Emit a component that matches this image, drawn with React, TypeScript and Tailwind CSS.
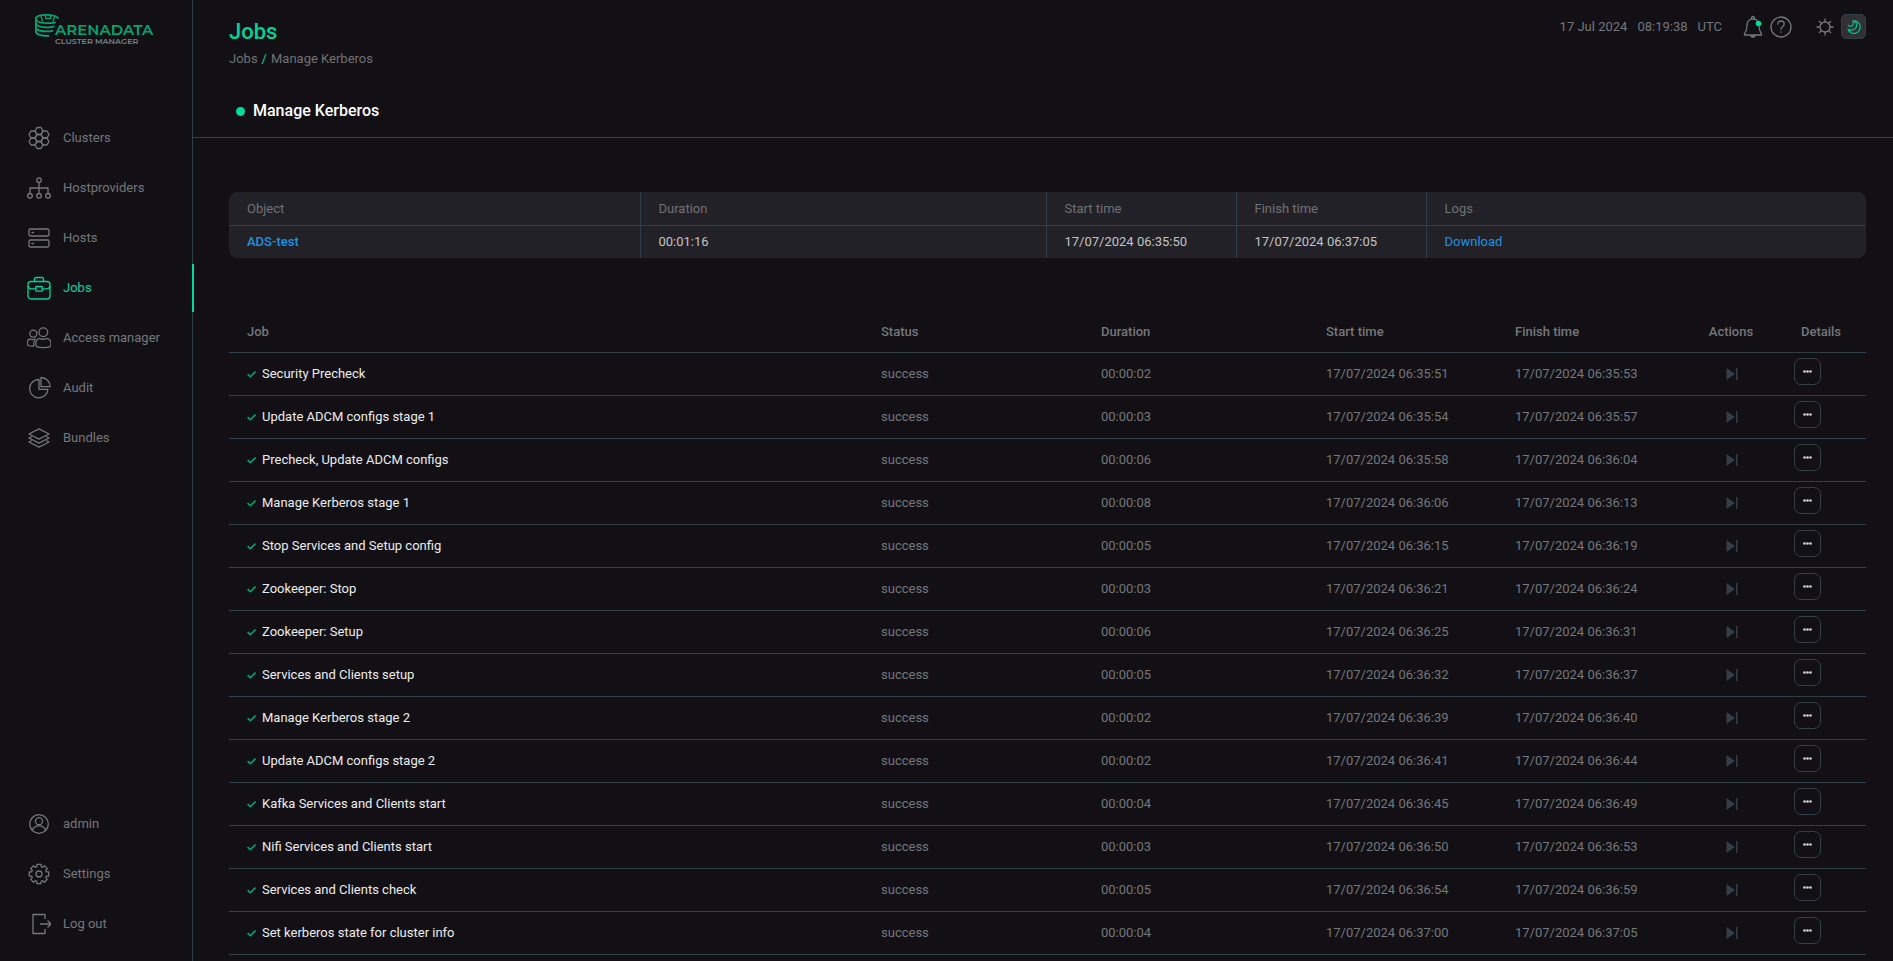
import React from 'react';

const NAV = [
  { label: 'Clusters', icon: ClustersIcon },
  { label: 'Hostproviders', icon: HostprovidersIcon },
  { label: 'Hosts', icon: HostsIcon },
  { label: 'Jobs', icon: JobsIcon },
  { label: 'Access manager', icon: AccessIcon },
  { label: 'Audit', icon: AuditIcon },
  { label: 'Bundles', icon: BundlesIcon },
];

const NAV_BOTTOM = [
  { label: 'admin', icon: UserIcon },
  { label: 'Settings', icon: GearIcon },
  { label: 'Log out', icon: LogoutIcon },
];

const JOBS = [
  { name: 'Security Precheck', duration: '00:00:02', start: '06:35:51', finish: '06:35:53' },
  { name: 'Update ADCM configs stage 1', duration: '00:00:03', start: '06:35:54', finish: '06:35:57' },
  { name: 'Precheck, Update ADCM configs', duration: '00:00:06', start: '06:35:58', finish: '06:36:04' },
  { name: 'Manage Kerberos stage 1', duration: '00:00:08', start: '06:36:06', finish: '06:36:13' },
  { name: 'Stop Services and Setup config', duration: '00:00:05', start: '06:36:15', finish: '06:36:19' },
  { name: 'Zookeeper: Stop', duration: '00:00:03', start: '06:36:21', finish: '06:36:24' },
  { name: 'Zookeeper: Setup', duration: '00:00:06', start: '06:36:25', finish: '06:36:31' },
  { name: 'Services and Clients setup', duration: '00:00:05', start: '06:36:32', finish: '06:36:37' },
  { name: 'Manage Kerberos stage 2', duration: '00:00:02', start: '06:36:39', finish: '06:36:40' },
  { name: 'Update ADCM configs stage 2', duration: '00:00:02', start: '06:36:41', finish: '06:36:44' },
  { name: 'Kafka Services and Clients start', duration: '00:00:04', start: '06:36:45', finish: '06:36:49' },
  { name: 'Nifi Services and Clients start', duration: '00:00:03', start: '06:36:50', finish: '06:36:53' },
  { name: 'Services and Clients check', duration: '00:00:05', start: '06:36:54', finish: '06:36:59' },
  { name: 'Set kerberos state for cluster info', duration: '00:00:04', start: '06:37:00', finish: '06:37:05' },
];

function Icon({ children }: { children: React.ReactNode }) {
  return (
    <svg
      viewBox="0 0 24 24"
      className="h-6 w-6 shrink-0"
      fill="none"
      stroke="currentColor"
      strokeWidth="1.3"
      strokeLinecap="round"
      strokeLinejoin="round"
      aria-hidden="true"
    >
      {children}
    </svg>
  );
}

function ClustersIcon() {
  const cells = [[12, 12], [12, 5], [18, 8.5], [18, 15.5], [12, 19], [6, 15.5], [6, 8.5]];
  return (
    <Icon>
      {cells.map(([x, y]) => (
        <path key={`${x}-${y}`} d={`M${x - 4} ${y}l2-3.5h4l2 3.5-2 3.5h-4z`} />
      ))}
    </Icon>
  );
}

function HostprovidersIcon() {
  return (
    <Icon>
      <circle cx="12" cy="4.2" r="2.3" />
      <circle cx="3" cy="19.8" r="2.3" />
      <circle cx="12" cy="19.8" r="2.3" />
      <circle cx="21" cy="19.8" r="2.3" />
      <path d="M12 6.5v11M3 17.5V12h18v5.5" />
    </Icon>
  );
}

function HostsIcon() {
  return (
    <Icon>
      <rect x="2" y="3" width="20" height="7" rx="1.4" />
      <rect x="2" y="14" width="20" height="7" rx="1.4" />
      <path d="M5 6.5h1.5M5 17.5h1.5" />
    </Icon>
  );
}

function JobsIcon() {
  return (
    <Icon>
      <rect x="1" y="5.5" width="22" height="17.5" rx="3" />
      <path d="M7.5 5.5V3A1.5 1.5 0 0 1 9 1.5h6A1.5 1.5 0 0 1 16.5 3v2.5" />
      <path d="M1.2 10.5c.5 1.5 1.5 2.3 3 2.3h4.6M22.8 10.5c-.5 1.5-1.5 2.3-3 2.3h-4.6" />
      <rect x="8.8" y="10.5" width="6.4" height="4.6" rx=".6" />
    </Icon>
  );
}

function AccessIcon() {
  return (
    <Icon>
      <circle cx="6.3" cy="7.7" r="3.5" />
      <circle cx="16.3" cy="6.3" r="4.4" />
      <path d="M12.8 12.4c-2.3.4-4 2.6-4 5.6 0 3 1.2 3.6 7.5 3.6s7.7-.6 7.7-3.6c0-3-1.7-5.2-4-5.6-1 1.1-6 1.1-7.200 0z" />
      <path d="M6.8 20.1C1.3 20.1.2 19.5.2 17.3c0-2.2 1.1-4 2.9-4.3 1.5.8 3.500.8 5 0-.9 1.4-1.5 4-1.3 7.1z" />
    </Icon>
  );
}

function AuditIcon() {
  return (
    <Icon>
      <path d="M12 3.5a9.2 9.2 0 1 0 9 9.8h-9z" />
      <path d="M14 1.5v9.2h9.2A9.2 9.2 0 0 0 14 1.5z" />
    </Icon>
  );
}

function BundlesIcon() {
  return (
    <Icon>
      <path d="M12 2.8 22 8l-10 5.2L2 8z" />
      <path d="M4.2 10.8 2 12l10 5.2L22 12l-2.2-1.2M4.2 14.8 2 16l10 5.2L22 16l-2.2-1.2" />
    </Icon>
  );
}

function UserIcon() {
  return (
    <Icon>
      <circle cx="12" cy="12" r="9.3" />
      <circle cx="12" cy="9.2" r="3.5" />
      <path d="M5.2 18c1.2-2.6 3.8-4.2 6.8-4.2s5.6 1.6 6.8 4.2" />
    </Icon>
  );
}

const GEAR_PATH =
  Array.from({ length: 8 }, (_, i) => {
    const corners = [[-17, 7.6], [-12, 9.9], [12, 9.9], [17, 7.6]];
    return corners
      .map(([offset, r], j) => {
        const a = ((i * 45 + offset) * Math.PI) / 180;
        const x = (12 + r * Math.sin(a)).toFixed(2);
        const y = (12 - r * Math.cos(a)).toFixed(2);
        return `${i === 0 && j === 0 ? 'M' : 'L'}${x} ${y}`;
      })
      .join('');
  }).join('') + 'z';

function GearIcon() {
  return (
    <Icon>
      <path d={GEAR_PATH} />
      <circle cx="12" cy="12" r="3" />
    </Icon>
  );
}

function LogoutIcon() {
  return (
    <Icon>
      <path d="M18 7V2.5H6v19h12V17M13 12h11M20.5 8.5 24 12l-3.5 3.5" strokeLinecap="butt" />
    </Icon>
  );
}

function Logo() {
  return (
    <a href="#" aria-label="Arenadata Cluster Manager" className="mt-3 ml-8 block">
      <svg viewBox="0 0 126 36" className="h-9 w-[126px]" fill="none">
        <g stroke="#00a770" strokeWidth="1.8" strokeLinecap="round">
          <path d="M26 6C24 3.5 19.5 2.8 14.5 2.8 8 2.8 3.900 4.3 3.9 6.4v13c0 2.300 4 4.300 12.6 4.5" />
          <path d="M4 7.5c1 2.3 5.5 3.7 12 3.7 2.8 0 5-.3 7-.9" />
          <path d="M4 12.3c1.5 2 6 3.1 12 3 2.3 0 4.2-.3 5.8-.8M4 16.4c1.5 2 6 3.1 11.5 3 2 0 3.6-.2 5-.6" />
          <path d="M9 4.2 10.5 9M13.5 6.3h5M22.5 4.8 21 9M13.5 3v3.3M18.5 3v3.3" strokeWidth="1.3" />
        </g>
        <text x="23" y="23" className="fill-[#00a770] font-[Montserrat,Inter] text-[15px] font-semibold">ARENADATA</text>
        <text x="23" y="32" className="fill-[#75838f] font-[Montserrat,Inter] text-[8px] font-semibold">CLUSTER MANAGER</text>
      </svg>
    </a>
  );
}

function NavItem({ label, icon: ItemIcon, active }: { label: string; icon: () => React.JSX.Element; active?: boolean }) {
  return (
    <li className="relative">
      <a
        href="#"
        aria-current={active ? 'page' : undefined}
        className={`flex h-12 items-center gap-3 pl-[27px] text-[13px] ${active ? 'text-[#00d49c]' : 'text-[#74777b] hover:text-white'}`}
      >
        <ItemIcon />
        {label}
      </a>
      {active && <span className="absolute inset-y-0 -right-[2px] w-[2px] bg-[#00d9a0]" />}
    </li>
  );
}

function Sidebar() {
  return (
    <aside className="sticky top-0 flex h-screen w-[193px] shrink-0 flex-col border-r border-[#323e48] pb-[13px]">
      <Logo />
      <nav className="mt-[66px] flex flex-1 flex-col justify-between">
        <ul className="flex flex-col gap-[2px]">
          {NAV.map((item) => (
            <NavItem key={item.label} {...item} active={item.label === 'Jobs'} />
          ))}
        </ul>
        <ul className="flex flex-col gap-[2px]">
          {NAV_BOTTOM.map((item) => (
            <NavItem key={item.label} {...item} />
          ))}
        </ul>
      </nav>
    </aside>
  );
}

function HeaderTools() {
  return (
    <div className="flex h-[25px] items-center text-[#74777b]">
      <time className="mr-5 flex gap-[10px] text-[13px]">
        <span>17 Jul 2024</span>
        <span>08:19:38</span>
        <span>UTC</span>
      </time>
      <button type="button" aria-label="Notifications" className="mr-[6px]">
        <svg viewBox="0 0 22 24" className="h-6 w-[22px]" fill="none" stroke="currentColor" strokeWidth="1.3" strokeLinejoin="round">
          <path d="M9.5 4.2V3a1.5 1.5 0 0 1 3 0v1.2M11 4C7 4 5 7 5 10.5c0 4.5-1 6.5-2.5 8.5v1h17v-1C18 17 17 15 17 10.5 17 7 15 4 11 4z" />
          <path d="M9 20.5a2 1.6 0 0 0 4 0" fill="currentColor" />
          <circle cx="16.5" cy="8.5" r="2.8" fill="#00d9a0" stroke="none" />
        </svg>
      </button>
      <button type="button" aria-label="Help" className="mr-[23px]">
        <svg viewBox="0 0 22 22" className="h-[22px] w-[22px]" fill="none" stroke="currentColor" strokeWidth="1.3" strokeLinecap="round">
          <circle cx="11" cy="11" r="10" />
          <path d="M7.8 8.2c0-2 1.3-3.2 3.2-3.2s3.2 1.2 3.2 3c0 2.4-3.2 2.5-3.2 5.3M11 15.8v.5" />
        </svg>
      </button>
      <button type="button" aria-label="Light theme" className="mr-[6px]">
        <svg viewBox="0 0 20 20" className="h-5 w-5" fill="none" stroke="currentColor" strokeWidth="1.3">
          <circle cx="10" cy="10" r="5" />
          <path d="M10 5V1.5M10 15v3.5M5 10H1.5M15 10h3.5M6.5 6.5 4 4M13.5 6.5 16 4M6.5 13.5 4 16M13.5 13.5 16 16" />
        </svg>
      </button>
      <button
        type="button"
        aria-label="Dark theme"
        aria-pressed="true"
        className="flex h-[25px] w-[25px] items-center justify-center rounded-[5px] border border-[#323e48] bg-[#313135] text-[#00c492]"
      >
        <svg viewBox="0 0 16 16" className="h-4 w-4" fill="none" stroke="currentColor" strokeWidth="1.2" strokeLinejoin="round">
          <path d="M6.8 1.9A6.3 6.3 0 1 1 2 10.2c3.500 2 8.6.2 8.600-4 0-2-1.400-3.900-3.800-4.300z" />
          <path d="M6.800 1.900c1 2 .6 4.400-1 5.100-1.400.6-2.900.2-3.800-.9" />
        </svg>
      </button>
    </div>
  );
}

function SummaryTable() {
  return (
    <div className="overflow-hidden rounded-lg bg-[#222127]">
      <table className="w-full table-fixed text-left text-[13px] leading-5">
        <colgroup>
          <col />
          <col className="w-[406px]" />
          <col className="w-[190px]" />
          <col className="w-[190px]" />
          <col className="w-[440px]" />
        </colgroup>
        <thead>
          <tr className="h-[33px] border-b border-[#323e48] text-[#6f7276] *:border-l *:border-[#323e48] *:px-[18px] *:pt-[2px] *:font-normal *:first:border-l-0">
            <th>Object</th>
            <th>Duration</th>
            <th>Start time</th>
            <th>Finish time</th>
            <th>Logs</th>
          </tr>
        </thead>
        <tbody>
          <tr className="h-[33px] text-[#c3c3c5] *:border-l *:border-[#323e48] *:px-[18px] *:first:border-l-0">
            <td>
              <a href="#" className="font-medium text-[#1c92e4]">ADS-test</a>
            </td>
            <td>00:01:16</td>
            <td>17/07/2024 06:35:50</td>
            <td>17/07/2024 06:37:05</td>
            <td>
              <a href="#" className="text-[#1c92e4]">Download</a>
            </td>
          </tr>
        </tbody>
      </table>
    </div>
  );
}

function JobsTable() {
  return (
    <table className="mt-[51px] w-full table-fixed text-left text-[13px] leading-5 text-[#74777b]">
      <colgroup>
        <col />
        <col className="w-[220px]" />
        <col className="w-[225px]" />
        <col className="w-[189px]" />
        <col className="w-[189px]" />
        <col className="w-[90px]" />
        <col className="w-[90px]" />
      </colgroup>
      <thead>
        <tr className="h-[43px] border-b border-[#323e48] *:px-[18px] *:pt-1 *:font-medium">
          <th>Job</th>
          <th>Status</th>
          <th>Duration</th>
          <th>Start time</th>
          <th>Finish time</th>
          <th className="text-center">Actions</th>
          <th className="text-center">Details</th>
        </tr>
      </thead>
      <tbody>
        {JOBS.map((job) => (
          <tr key={job.name} className="h-[43px] border-b border-[#323e48] *:px-[18px]">
            <td className="text-[#ececee]">
              <div className="flex items-center gap-[6px]">
                <svg viewBox="0 0 9 8" className="h-2 w-[9px]" fill="none" stroke="#00a76b" strokeWidth="1.6" aria-hidden="true">
                  <path d="M.6 4.2 3.3 6.7 8.5 1.5" />
                </svg>
                {job.name}
              </div>
            </td>
            <td>success</td>
            <td>{job.duration}</td>
            <td>17/07/2024 {job.start}</td>
            <td>17/07/2024 {job.finish}</td>
            <td>
              <button type="button" disabled aria-label={`Skip ${job.name}`} className="mx-auto block">
                <svg viewBox="0 0 14 12" className="h-3 w-[14px]" fill="#323e48">
                  <path d="M2.5 0 11 6l-8.5 6zM12 0h1.500v12H12z" />
                </svg>
              </button>
            </td>
            <td className="pb-1">
              <button
                type="button"
                aria-label={`Details of ${job.name}`}
                className="flex h-[27px] w-[27px] items-center justify-center rounded-[7px] border border-[#323e48]"
              >
                <svg viewBox="0 0 9 3" className="h-[3px] w-[9px]" fill="#d5d5d7">
                  <circle cx="1.5" cy="1.5" r="1.3" />
                  <circle cx="4.5" cy="1.5" r="1.3" />
                  <circle cx="7.5" cy="1.5" r="1.3" />
                </svg>
              </button>
            </td>
          </tr>
        ))}
      </tbody>
    </table>
  );
}

export default function App() {
  return (
    <div className="flex min-h-screen bg-[#121014] font-[Roboto,sans-serif]">
      <Sidebar />
      <div className="min-w-0 flex-1">
        <header className="border-b border-[#323e48] pb-[14px] pl-9 pr-[27px] pt-[14px]">
          <div className="flex items-start justify-between">
            <div>
              <h1 className="pt-1 text-[22px] leading-7 font-medium text-[#00d49c]">Jobs</h1>
              <nav aria-label="Breadcrumb" className="mt-[3px] flex gap-1 text-[13px] leading-5 text-[#6f7276]">
                <a href="#">Jobs</a>
                <span className="text-[#00d49c]">/</span>
                <span>Manage Kerberos</span>
              </nav>
            </div>
            <HeaderTools />
          </div>
          <div className="mt-[30px] flex items-center gap-2 pl-[7px]">
            <span className="h-[9px] w-[9px] rounded-full bg-[#00d9a0]" />
            <h2 className="text-base font-medium text-white">Manage Kerberos</h2>
          </div>
        </header>
        <main className="pt-[54px] pr-[27px] pb-1 pl-9">
          <SummaryTable />
          <JobsTable />
        </main>
      </div>
    </div>
  );
}
